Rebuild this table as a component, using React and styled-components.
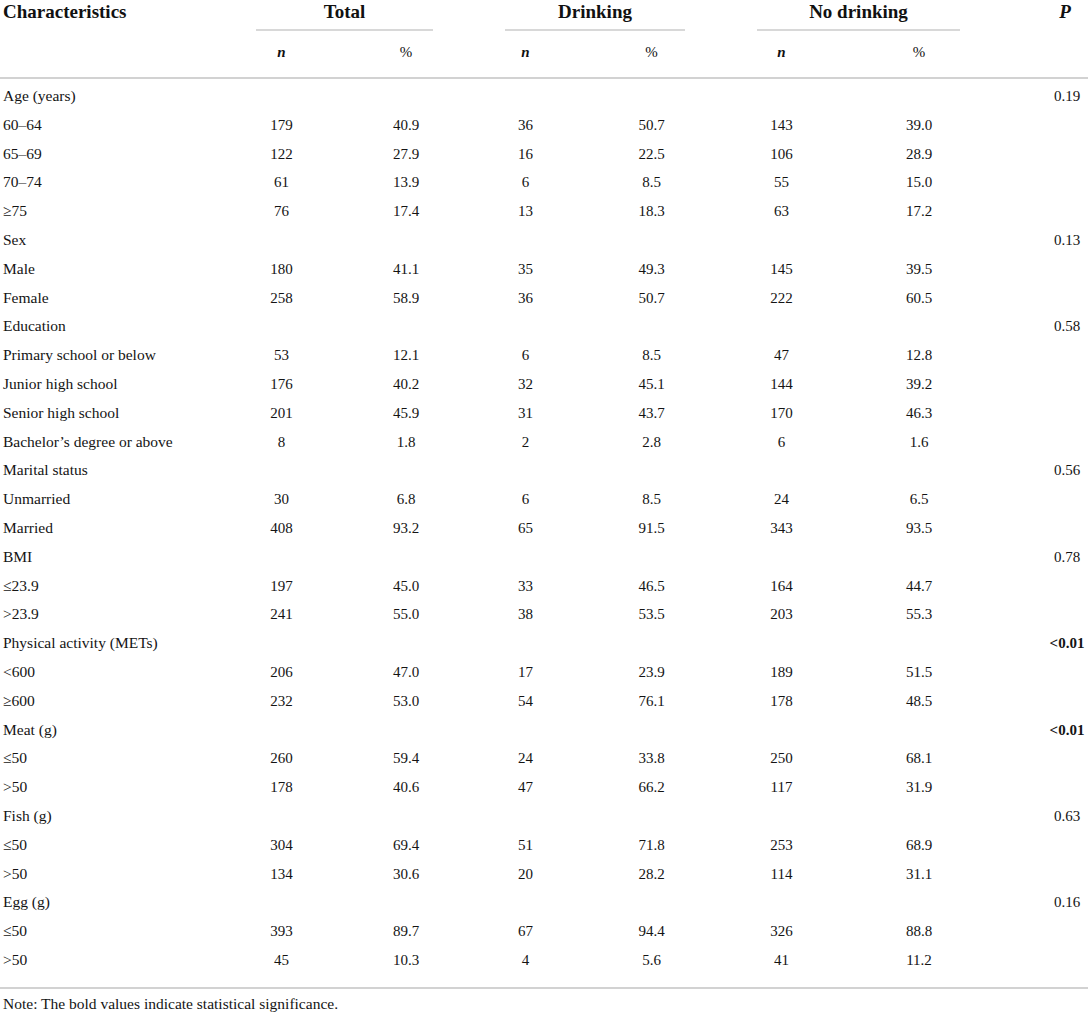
import React from "react";
import styled, { createGlobalStyle } from "styled-components";

const Global = createGlobalStyle`
  html, body { margin: 0; padding: 0; background: #fff; }
  body { font-family: "Liberation Serif", "Times New Roman", serif; color: #141414; }
`;

const COLS = "220px 123px 126px 113px 139px 121px 154px 92px";

const Table = styled.div`
  width: 1088px;
`;

const Head = styled.div`
  border-bottom: 2px solid #d2d2d2;
`;

const HeadRow = styled.div`
  display: grid;
  grid-template-columns: ${COLS};
  align-items: start;
  padding-top: ${(p) => p.$pt || 0}px;
  padding-bottom: ${(p) => p.$pb || 0}px;
`;

const HeadCell = styled.div`
  font-size: ${(p) => p.$size || 19}px;
  line-height: ${(p) => p.$lh || 24}px;
  font-weight: ${(p) => (p.$bold ? 700 : 400)};
  font-style: ${(p) => (p.$italic ? "italic" : "normal")};
  text-align: ${(p) => p.$align || "center"};
  padding-left: ${(p) => p.$pl || 0}px;
  color: #111;
`;

const Group = styled.div`
  grid-column: ${(p) => p.$span};
  margin: 0 36px;
  padding-bottom: 5px;
  border-bottom: 2px solid #d8d8d8;
  text-align: center;
  font-size: 19px;
  line-height: 24px;
  font-weight: 700;
  color: #111;
`;

const Body = styled.div`
  padding-top: 3px;
  padding-bottom: 12px;
  border-bottom: 2px solid #d2d2d2;
`;

const Row = styled.div`
  display: grid;
  grid-template-columns: ${COLS};
  height: 28.8px;
  line-height: 28.8px;
  font-size: 15px;
`;

const Label = styled.div`
  padding-left: 3px;
  white-space: nowrap;
  font-size: 15.5px;
`;

const Num = styled.div`
  text-align: center;
`;

const PCell = styled.div`
  text-align: center;
  padding-left: 50px;
  font-weight: ${(p) => (p.$bold ? 700 : 400)};
`;

const Note = styled.div`
  margin-top: 5px;
  padding-left: 3px;
  font-size: 15.5px;
  line-height: 19px;
`;

const groups = [
  {
    title: "Age (years)", p: "0.19",
    rows: [
      ["60–64", "179", "40.9", "36", "50.7", "143", "39.0"],
      ["65–69", "122", "27.9", "16", "22.5", "106", "28.9"],
      ["70–74", "61", "13.9", "6", "8.5", "55", "15.0"],
      ["≥75", "76", "17.4", "13", "18.3", "63", "17.2"],
    ],
  },
  {
    title: "Sex", p: "0.13",
    rows: [
      ["Male", "180", "41.1", "35", "49.3", "145", "39.5"],
      ["Female", "258", "58.9", "36", "50.7", "222", "60.5"],
    ],
  },
  {
    title: "Education", p: "0.58",
    rows: [
      ["Primary school or below", "53", "12.1", "6", "8.5", "47", "12.8"],
      ["Junior high school", "176", "40.2", "32", "45.1", "144", "39.2"],
      ["Senior high school", "201", "45.9", "31", "43.7", "170", "46.3"],
      ["Bachelor’s degree or above", "8", "1.8", "2", "2.8", "6", "1.6"],
    ],
  },
  {
    title: "Marital status", p: "0.56",
    rows: [
      ["Unmarried", "30", "6.8", "6", "8.5", "24", "6.5"],
      ["Married", "408", "93.2", "65", "91.5", "343", "93.5"],
    ],
  },
  {
    title: "BMI", p: "0.78",
    rows: [
      ["≤23.9", "197", "45.0", "33", "46.5", "164", "44.7"],
      [">23.9", "241", "55.0", "38", "53.5", "203", "55.3"],
    ],
  },
  {
    title: "Physical activity (METs)", p: "<0.01", bold: true,
    rows: [
      ["<600", "206", "47.0", "17", "23.9", "189", "51.5"],
      ["≥600", "232", "53.0", "54", "76.1", "178", "48.5"],
    ],
  },
  {
    title: "Meat (g)", p: "<0.01", bold: true,
    rows: [
      ["≤50", "260", "59.4", "24", "33.8", "250", "68.1"],
      [">50", "178", "40.6", "47", "66.2", "117", "31.9"],
    ],
  },
  {
    title: "Fish (g)", p: "0.63",
    rows: [
      ["≤50", "304", "69.4", "51", "71.8", "253", "68.9"],
      [">50", "134", "30.6", "20", "28.2", "114", "31.1"],
    ],
  },
  {
    title: "Egg (g)", p: "0.16",
    rows: [
      ["≤50", "393", "89.7", "67", "94.4", "326", "88.8"],
      [">50", "45", "10.3", "4", "5.6", "41", "11.2"],
    ],
  },
];

export default function App() {
  return (
    <>
      <Global />
      <Table>
        <Head>
          <HeadRow>
            <HeadCell $bold $align="left" $pl={3}>Characteristics</HeadCell>
            <Group $span="2 / 4">Total</Group>
            <Group $span="4 / 6">Drinking</Group>
            <Group $span="6 / 8">No drinking</Group>
            <HeadCell $bold $italic $pl={46}>P</HeadCell>
          </HeadRow>
          <HeadRow $pt={11} $pb={15}>
            <HeadCell />
            <HeadCell $size={15} $lh={20} $bold $italic>n</HeadCell>
            <HeadCell $size={15} $lh={20}>%</HeadCell>
            <HeadCell $size={15} $lh={20} $bold $italic>n</HeadCell>
            <HeadCell $size={15} $lh={20}>%</HeadCell>
            <HeadCell $size={15} $lh={20} $bold $italic>n</HeadCell>
            <HeadCell $size={15} $lh={20}>%</HeadCell>
            <HeadCell />
          </HeadRow>
        </Head>
        <Body>
          {groups.map((g) => (
            <React.Fragment key={g.title}>
              <Row>
                <Label>{g.title}</Label>
                <Num />
                <Num />
                <Num />
                <Num />
                <Num />
                <Num />
                <PCell $bold={g.bold}>{g.p}</PCell>
              </Row>
              {g.rows.map((r, i) => (
                <Row key={g.title + i}>
                  <Label>{r[0]}</Label>
                  {r.slice(1).map((v, j) => (
                    <Num key={j}>{v}</Num>
                  ))}
                  <PCell />
                </Row>
              ))}
            </React.Fragment>
          ))}
        </Body>
        <Note>Note: The bold values indicate statistical significance.</Note>
      </Table>
    </>
  );
}
